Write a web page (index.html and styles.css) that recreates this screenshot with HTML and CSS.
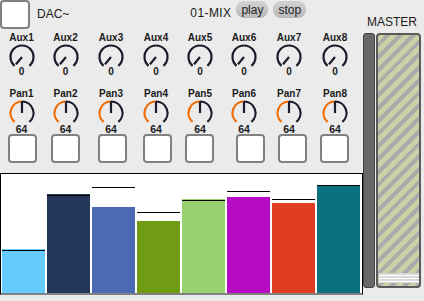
FILE: index.html
```html
<!DOCTYPE html>
<html lang="en">
<head>
  <meta charset="UTF-8">
  <title>01-MIX</title>
  <link rel="stylesheet" href="styles.css">
</head>
<body>
  <svg class="defs" width="0" height="0">
    <symbol id="knob-aux" viewBox="0 0 28 28">
      <path d="M6.6 22.8 A11.5 11.5 0 1 1 21.4 22.8" fill="none" stroke="#1b1b2b" stroke-width="2.2"/>
      <line x1="14" y1="14" x2="8" y2="21.2" stroke="#1b1b2b" stroke-width="2.2"/>
    </symbol>
    <symbol id="knob-pan" viewBox="0 0 28 28">
      <path d="M6.6 22.8 A11.5 11.5 0 0 1 14 2.5" fill="none" stroke="#f26b00" stroke-width="2.2"/>
      <path d="M14 2.5 A11.5 11.5 0 0 1 21.4 22.8" fill="none" stroke="#1b1b2b" stroke-width="2.2"/>
      <line x1="14" y1="2.5" x2="14" y2="14" stroke="#1b1b2b" stroke-width="2.2"/>
    </symbol>
  </svg>

  <div class="patch">
    <section class="mixer">
      <div class="topbar">
        <div class="toggle"></div>
        <span class="dac">DAC~</span>
        <span class="title">01-MIX</span>
        <button class="pill">play</button>
        <button class="pill">stop</button>
      </div>

      <div class="dials aux">
        <div class="dial"><span class="dial-label">Aux1</span><svg class="knob" viewBox="0 0 28 28"><use href="#knob-aux" width="28" height="28"/></svg><span class="dial-value">0</span></div>
        <div class="dial"><span class="dial-label">Aux2</span><svg class="knob" viewBox="0 0 28 28"><use href="#knob-aux" width="28" height="28"/></svg><span class="dial-value">0</span></div>
        <div class="dial"><span class="dial-label">Aux3</span><svg class="knob" viewBox="0 0 28 28"><use href="#knob-aux" width="28" height="28"/></svg><span class="dial-value">0</span></div>
        <div class="dial"><span class="dial-label">Aux4</span><svg class="knob" viewBox="0 0 28 28"><use href="#knob-aux" width="28" height="28"/></svg><span class="dial-value">0</span></div>
        <div class="dial"><span class="dial-label">Aux5</span><svg class="knob" viewBox="0 0 28 28"><use href="#knob-aux" width="28" height="28"/></svg><span class="dial-value">0</span></div>
        <div class="dial"><span class="dial-label">Aux6</span><svg class="knob" viewBox="0 0 28 28"><use href="#knob-aux" width="28" height="28"/></svg><span class="dial-value">0</span></div>
        <div class="dial"><span class="dial-label">Aux7</span><svg class="knob" viewBox="0 0 28 28"><use href="#knob-aux" width="28" height="28"/></svg><span class="dial-value">0</span></div>
        <div class="dial"><span class="dial-label">Aux8</span><svg class="knob" viewBox="0 0 28 28"><use href="#knob-aux" width="28" height="28"/></svg><span class="dial-value">0</span></div>
      </div>

      <div class="dials pan">
        <div class="dial"><span class="dial-label">Pan1</span><svg class="knob" viewBox="0 0 28 28"><use href="#knob-pan" width="28" height="28"/></svg><span class="dial-value">64</span></div>
        <div class="dial"><span class="dial-label">Pan2</span><svg class="knob" viewBox="0 0 28 28"><use href="#knob-pan" width="28" height="28"/></svg><span class="dial-value">64</span></div>
        <div class="dial"><span class="dial-label">Pan3</span><svg class="knob" viewBox="0 0 28 28"><use href="#knob-pan" width="28" height="28"/></svg><span class="dial-value">64</span></div>
        <div class="dial"><span class="dial-label">Pan4</span><svg class="knob" viewBox="0 0 28 28"><use href="#knob-pan" width="28" height="28"/></svg><span class="dial-value">64</span></div>
        <div class="dial"><span class="dial-label">Pan5</span><svg class="knob" viewBox="0 0 28 28"><use href="#knob-pan" width="28" height="28"/></svg><span class="dial-value">64</span></div>
        <div class="dial"><span class="dial-label">Pan6</span><svg class="knob" viewBox="0 0 28 28"><use href="#knob-pan" width="28" height="28"/></svg><span class="dial-value">64</span></div>
        <div class="dial"><span class="dial-label">Pan7</span><svg class="knob" viewBox="0 0 28 28"><use href="#knob-pan" width="28" height="28"/></svg><span class="dial-value">64</span></div>
        <div class="dial"><span class="dial-label">Pan8</span><svg class="knob" viewBox="0 0 28 28"><use href="#knob-pan" width="28" height="28"/></svg><span class="dial-value">64</span></div>
      </div>

      <div class="toggles">
        <div class="toggle"></div>
        <div class="toggle"></div>
        <div class="toggle"></div>
        <div class="toggle"></div>
        <div class="toggle"></div>
        <div class="toggle"></div>
        <div class="toggle"></div>
        <div class="toggle"></div>
      </div>

      <div class="levels">
        <div class="level"><div class="level-fill" style="height: 44px; background: #66ccff;"></div><div class="level-peak" style="bottom: 42px;"></div></div>
        <div class="level"><div class="level-fill" style="height: 99px; background: #243659;"></div><div class="level-peak" style="bottom: 97px;"></div></div>
        <div class="level"><div class="level-fill" style="height: 86px; background: #4a6ab6;"></div><div class="level-peak" style="bottom: 105px;"></div></div>
        <div class="level"><div class="level-fill" style="height: 72px; background: #709c14;"></div><div class="level-peak" style="bottom: 80px;"></div></div>
        <div class="level"><div class="level-fill" style="height: 94px; background: #96d270;"></div><div class="level-peak" style="bottom: 92px;"></div></div>
        <div class="level"><div class="level-fill" style="height: 96px; background: #b80bc6;"></div><div class="level-peak" style="bottom: 101px;"></div></div>
        <div class="level"><div class="level-fill" style="height: 90px; background: #e03c22;"></div><div class="level-peak" style="bottom: 93px;"></div></div>
        <div class="level"><div class="level-fill" style="height: 108px; background: #0b717e;"></div><div class="level-peak" style="bottom: 107px;"></div></div>
      </div>
    </section>

    <section class="master">
      <div class="master-label">MASTER</div>
      <div class="fader">
        <div class="fader-rail"></div>
        <div class="fader-body">
          <div class="fader-knob"></div>
        </div>
      </div>
    </section>
  </div>
</body>
</html>
```

FILE: styles.css
```css
body {
  font-family: "Liberation Sans", Arial, sans-serif;
  background-color: #ebebeb;
  color: #1a1a1a;
  margin: 0;
  padding: 0;
}

.defs {
  position: absolute;
  width: 0;
  height: 0;
}

.patch {
  display: flex;
  width: 424px;
  height: 301px;
}

.mixer {
  width: 363px;
}

.toggle {
  box-sizing: border-box;
  width: 29px;
  height: 29px;
  background-color: white;
  border: 2px solid #808080;
  border-radius: 4px;
}

.topbar {
  display: flex;
  align-items: flex-start;
  height: 30px;
}

.topbar .toggle {
  width: 30px;
  margin: 0;
}

.dac {
  font-size: 12px;
  line-height: 14px;
  margin: 7px 0 0 7px;
}

.title {
  font-size: 12px;
  line-height: 14px;
  letter-spacing: 0.4px;
  margin: 6px 0 0 121px;
}

.pill {
  font-family: inherit;
  font-size: 12px;
  color: #222;
  height: 17px;
  margin: 1px 0 0 5px;
  padding: 0 5px;
  border: none;
  border-radius: 8px;
  background: linear-gradient(#d2d2d2, #b9b9b9);
}

.dials {
  display: grid;
  grid-template-columns: 43px 45px 46px 44px 44px 44px 46px 46px;
}

.aux {
  margin-top: 2px;
}

.pan {
  margin-top: 11px;
}

.dial {
  display: flex;
  flex-direction: column;
  align-items: center;
}

.dial-label {
  font-size: 10px;
  font-weight: bold;
  line-height: 11px;
}

.knob {
  display: block;
  width: 28px;
  height: 28px;
}

.dial-value {
  font-size: 10px;
  font-weight: bold;
  line-height: 10px;
  margin-top: -4px;
}

.pan .dial-value {
  font-size: 10.5px;
  margin-top: -3px;
}

.toggles {
  display: grid;
  grid-template-columns: 43px 47px 45px 42px 51px 42px 42px 29px;
  padding-left: 8px;
}

.levels {
  display: flex;
  align-items: stretch;
  gap: 2px;
  height: 119px;
  margin-top: 10px;
  padding-left: 1px;
  background-color: white;
  border: 1px solid black;
  border-bottom: 2px solid #808080;
}

.level {
  position: relative;
  display: flex;
  flex-direction: column;
  justify-content: flex-end;
  width: 43px;
}

.level-peak {
  position: absolute;
  left: 0;
  right: 0;
  height: 1px;
  background-color: black;
}

.master {
  width: 61px;
}

.master-label {
  width: 58px;
  font-size: 12px;
  line-height: 14px;
  text-align: center;
  margin-top: 15px;
}

.fader {
  display: flex;
  gap: 1px;
  height: 255px;
  margin-top: 4px;
}

.fader-rail {
  box-sizing: border-box;
  width: 12px;
  background-color: #686868;
  border: 1px solid #444;
  border-radius: 3px;
}

.fader-body {
  box-sizing: border-box;
  width: 45px;
  display: flex;
  flex-direction: column;
  justify-content: flex-end;
  align-items: center;
  padding-bottom: 3px;
  border: 2px solid #5a5a5a;
  border-radius: 4px;
  background: repeating-linear-gradient(135deg, #ccd0a6 0 5px, #ababab 5px 9px);
}

.fader-knob {
  width: 40px;
  height: 10px;
  background: repeating-linear-gradient(to bottom, #d8d8d8 0 2px, white 2px 3px);
}
```
